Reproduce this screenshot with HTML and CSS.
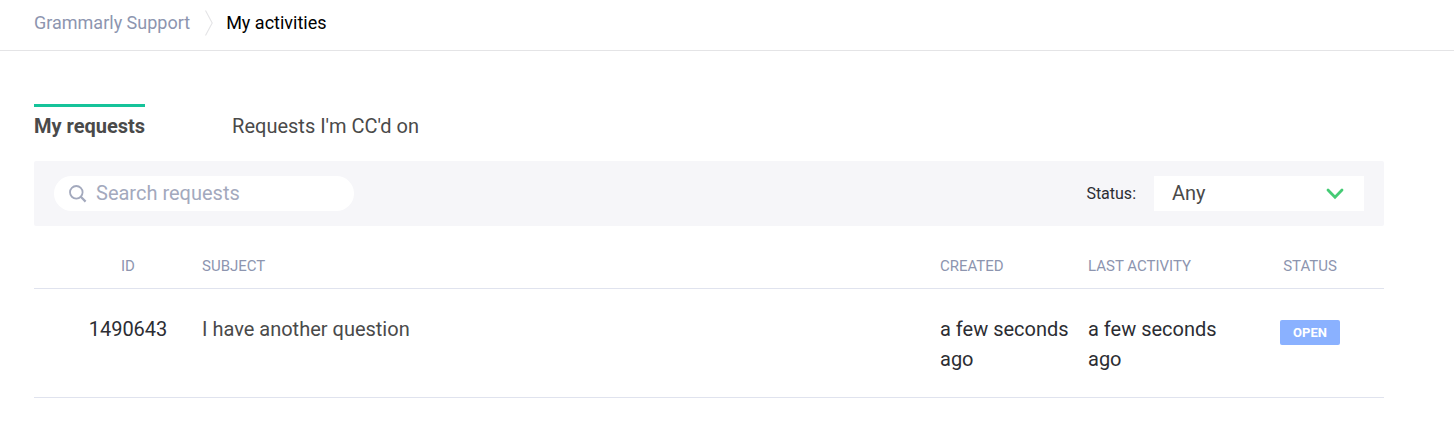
FILE: index.html
```html
<!DOCTYPE html>
<html lang="en">

<head>
  <meta charset="UTF-8">
  <meta name="viewport" content="width=device-width, initial-scale=1.0">
  <title>My activities</title>
  <link rel="stylesheet" href="styles.css">
</head>

<body>
  <nav class="breadcrumbs">
    <a href="#">Grammarly Support</a>
    <svg class="separator" width="8" height="26" viewBox="0 0 8 26">
      <path d="M0.5 0.5 L7.2 13 L0.5 25.5" fill="none" stroke="#e4e4e6" stroke-width="1.1" />
    </svg>
    <span>My activities</span>
  </nav>

  <main class="container">
    <nav class="tabs">
      <a class="tab active" href="#">My requests</a>
      <a class="tab" href="#">Requests I'm CC'd on</a>
    </nav>

    <form class="toolbar">
      <label class="search">
        <svg width="18" height="18" viewBox="0 0 18 18" fill="none" stroke="#a3a9bd" stroke-width="1.8">
          <circle cx="7.3" cy="7.3" r="6.3" />
          <path d="M11.8 11.8 L16.6 16.6" stroke-width="2.2" />
        </svg>
        <input type="search" placeholder="Search requests" aria-label="Search requests">
      </label>
      <div class="filter">
        <label for="status">Status:</label>
        <div class="select-box">
          <select id="status">
            <option>Any</option>
            <option>Open</option>
            <option>Awaiting your reply</option>
            <option>Solved</option>
          </select>
          <svg class="arrow" width="18" height="12" viewBox="0 0 18 12">
            <path d="M2 2 L9 9.2 L16 2" fill="none" stroke="#45cb75" stroke-width="2.8" stroke-linecap="round" />
          </svg>
        </div>
      </div>
    </form>

    <table class="requests">
      <thead>
        <tr>
          <th class="id">ID</th>
          <th>Subject</th>
          <th class="date">Created</th>
          <th class="date">Last activity</th>
          <th class="status">Status</th>
        </tr>
      </thead>
      <tbody>
        <tr>
          <td class="id">1490643</td>
          <td><a href="#">I have another question</a></td>
          <td class="date">a few seconds ago</td>
          <td class="date">a few seconds ago</td>
          <td class="status"><span class="label">Open</span></td>
        </tr>
      </tbody>
    </table>
  </main>
</body>

</html>
```
FILE: styles.css
```css
* {
  box-sizing: border-box;
}

body {
  margin: 0;
  background: #fff;
  color: #2c2d33;
  font-family: Roboto, "Liberation Sans", sans-serif;
  font-size: 20px;
  line-height: 30px;
}

a {
  color: #4a4a4a;
  text-decoration: none;
}

.breadcrumbs {
  display: flex;
  align-items: center;
  padding: 8px 34px 12px;
  border-bottom: 1px solid #e4e4e6;
  color: #000;
  font-size: 18px;
}

.breadcrumbs a {
  color: #8d95af;
}

.separator {
  margin: 0 13px 0 15px;
}

.container {
  padding: 53px 70px 30px 34px;
}

.tabs {
  display: flex;
  gap: 87px;
  padding-bottom: 20px;
}

.tab {
  padding-top: 4px;
  border-top: 3px solid transparent;
}

.tab.active {
  border-color: #15c39a;
  font-weight: bold;
}

.toolbar {
  display: flex;
  align-items: center;
  justify-content: space-between;
  padding: 15px 20px;
  border-radius: 2px;
  background: #f6f6f9;
}

.search {
  display: flex;
  align-items: center;
  gap: 9px;
  width: 300px;
  height: 35px;
  padding: 0 15px;
  border-radius: 18px;
  background: #fff;
}

.search input {
  flex: 1;
  min-width: 0;
  padding: 0 0 2px;
  border: 0;
  outline: 0;
  background: none;
  color: inherit;
  font: inherit;
}

.search input::placeholder {
  color: #a3a9bd;
}

.filter {
  display: flex;
  align-items: center;
  gap: 18px;
}

.filter label {
  font-size: 16px;
}

.select-box {
  position: relative;
}

.select-box select {
  display: block;
  width: 210px;
  height: 35px;
  padding: 0 40px 2px 18px;
  border: 0;
  border-radius: 0;
  appearance: none;
  background: #fff;
  color: #4a4a4a;
  font: inherit;
}

/* arrow sits over the select */
.arrow {
  position: absolute;
  top: 12px;
  right: 20px;
  pointer-events: none;
}

.requests {
  width: 100%;
  border-collapse: separate;
  border-spacing: 0;
  table-layout: fixed;
}

.requests th,
.requests td {
  border-bottom: 1px solid #e0e3ee;
  text-align: left;
  vertical-align: top;
}

.requests th {
  padding: 30px 0 12px;
  color: #8d95af;
  font-size: 15px;
  font-weight: normal;
  line-height: 20px;
  text-transform: uppercase;
}

.requests td {
  padding: 25px 0 23px;
}

.requests .id {
  width: 168px;
  padding-left: 20px;
  text-align: center;
}

.requests .date {
  width: 148px;
}

.requests .status {
  width: 148px;
  text-align: center;
}

.label {
  display: inline-block;
  width: 60px;
  margin-top: 6px;
  border-radius: 2px;
  background: #8ab1ff;
  color: #fff;
  font-size: 13px;
  font-weight: bold;
  line-height: 25px;
  text-transform: uppercase;
  vertical-align: top;
}
```
